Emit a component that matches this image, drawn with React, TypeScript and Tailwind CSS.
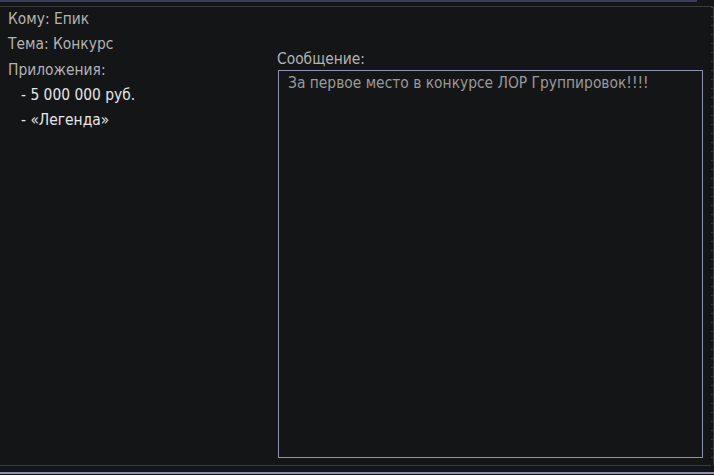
const ATTACHMENTS = ["- 5 000 000 руб.", "- «Легенда»"];

export default function App() {
  return (
    <div
      className="flex h-[475px] w-[714px] flex-col bg-[#141517] text-[15.4px]"
      style={{ fontFamily: "'DejaVu Sans Condensed', 'DejaVu Sans', sans-serif", fontStretch: "condensed" }}
    >
      {/* top window strip */}
      <div className="h-[2px] w-[697px] bg-[#3a3c5c]" />

      {/* framed body */}
      <div className="mt-[4px] flex h-[460px] w-[713px] border-t border-[#3a3b3d]">
        <div className="flex flex-1 flex-col">
          <div className="flex flex-1">
            {/* left column */}
            <div className="flex w-[270px] flex-col pl-[8px] leading-[25px]">
              <div className="text-[#b3b3b3]">Кому: Епик</div>
              <div className="text-[#b3b3b3]">Тема: Конкурс</div>
              <div className="mt-[1px] text-[#b3b3b3]">Приложения:</div>
              {ATTACHMENTS.map((a) => (
                <div key={a} className="pl-[13px] text-[#e6e6e6]">
                  {a}
                </div>
              ))}
            </div>

            {/* message */}
            <div className="flex flex-1 flex-col pt-[42px]">
              <div className="pl-[7px] leading-[20px] text-[#b3b3b3]">Сообщение:</div>
              <div className="ml-[8px] mt-px h-[388px] w-[425px] border border-[#8f93b3] px-[9px] pt-[2px] leading-[20px] text-[#9a9a9a]">
                За первое место в конкурсе ЛОР Группировок!!!!
              </div>
            </div>
          </div>
          <div className="h-px w-[711px] bg-[#3a3b3d]" />
        </div>

        {/* right ruler */}
        <div className="h-full w-[3px] bg-[repeating-linear-gradient(to_bottom,#3a3b3d_0px,#3a3b3d_1px,transparent_1px,transparent_9px)]">
          <div className="ml-[2px] h-full w-px bg-[#3a3b3d]" />
        </div>
      </div>

      <div className="mt-[6px] h-[2px] w-full bg-[#8f93b3]" />
    </div>
  );
}
